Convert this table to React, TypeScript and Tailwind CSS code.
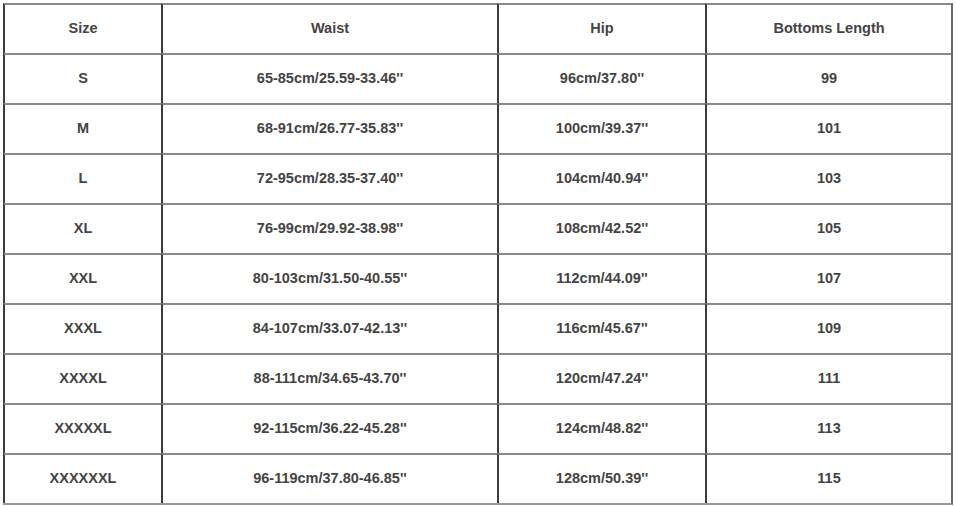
import React from 'react';

const header = ['Size', 'Waist', 'Hip', 'Bottoms Length'];

const rows: string[][] = [
  ['S', "65-85cm/25.59-33.46''", "96cm/37.80''", '99'],
  ['M', "68-91cm/26.77-35.83''", "100cm/39.37''", '101'],
  ['L', "72-95cm/28.35-37.40''", "104cm/40.94''", '103'],
  ['XL', "76-99cm/29.92-38.98''", "108cm/42.52''", '105'],
  ['XXL', "80-103cm/31.50-40.55''", "112cm/44.09''", '107'],
  ['XXXL', "84-107cm/33.07-42.13''", "116cm/45.67''", '109'],
  ['XXXXL', "88-111cm/34.65-43.70''", "120cm/47.24''", '111'],
  ['XXXXXL', "92-115cm/36.22-45.28''", "124cm/48.82''", '113'],
  ['XXXXXXL', "96-119cm/37.80-46.85''", "128cm/50.39''", '115'],
];

const Row = ({ cells }: { cells: string[] }) => (
  <div className="grid grid-cols-[158px_336px_208px_246px] h-[50px]">
    {cells.map((c, i) => (
      <div
        key={i}
        className="flex items-center justify-center border-l-2 border-l-[#3c3c3c] border-t-2 border-t-[#8a8a8a]"
      >
        {c}
      </div>
    ))}
  </div>
);

export default function App() {
  return (
    <div className="w-[956px] h-[506px] bg-white pl-[3px] pt-[3px] font-['Liberation_Sans',Arial,sans-serif] text-[14.5px] font-bold text-[#444444]">
      <div className="w-[950px] border-r-2 border-r-[#6a6a6a] border-b-2 border-b-[#9a9a9a]">
        <Row cells={header} />
        {rows.map((r) => (
          <Row key={r[0]} cells={r} />
        ))}
      </div>
    </div>
  );
}
